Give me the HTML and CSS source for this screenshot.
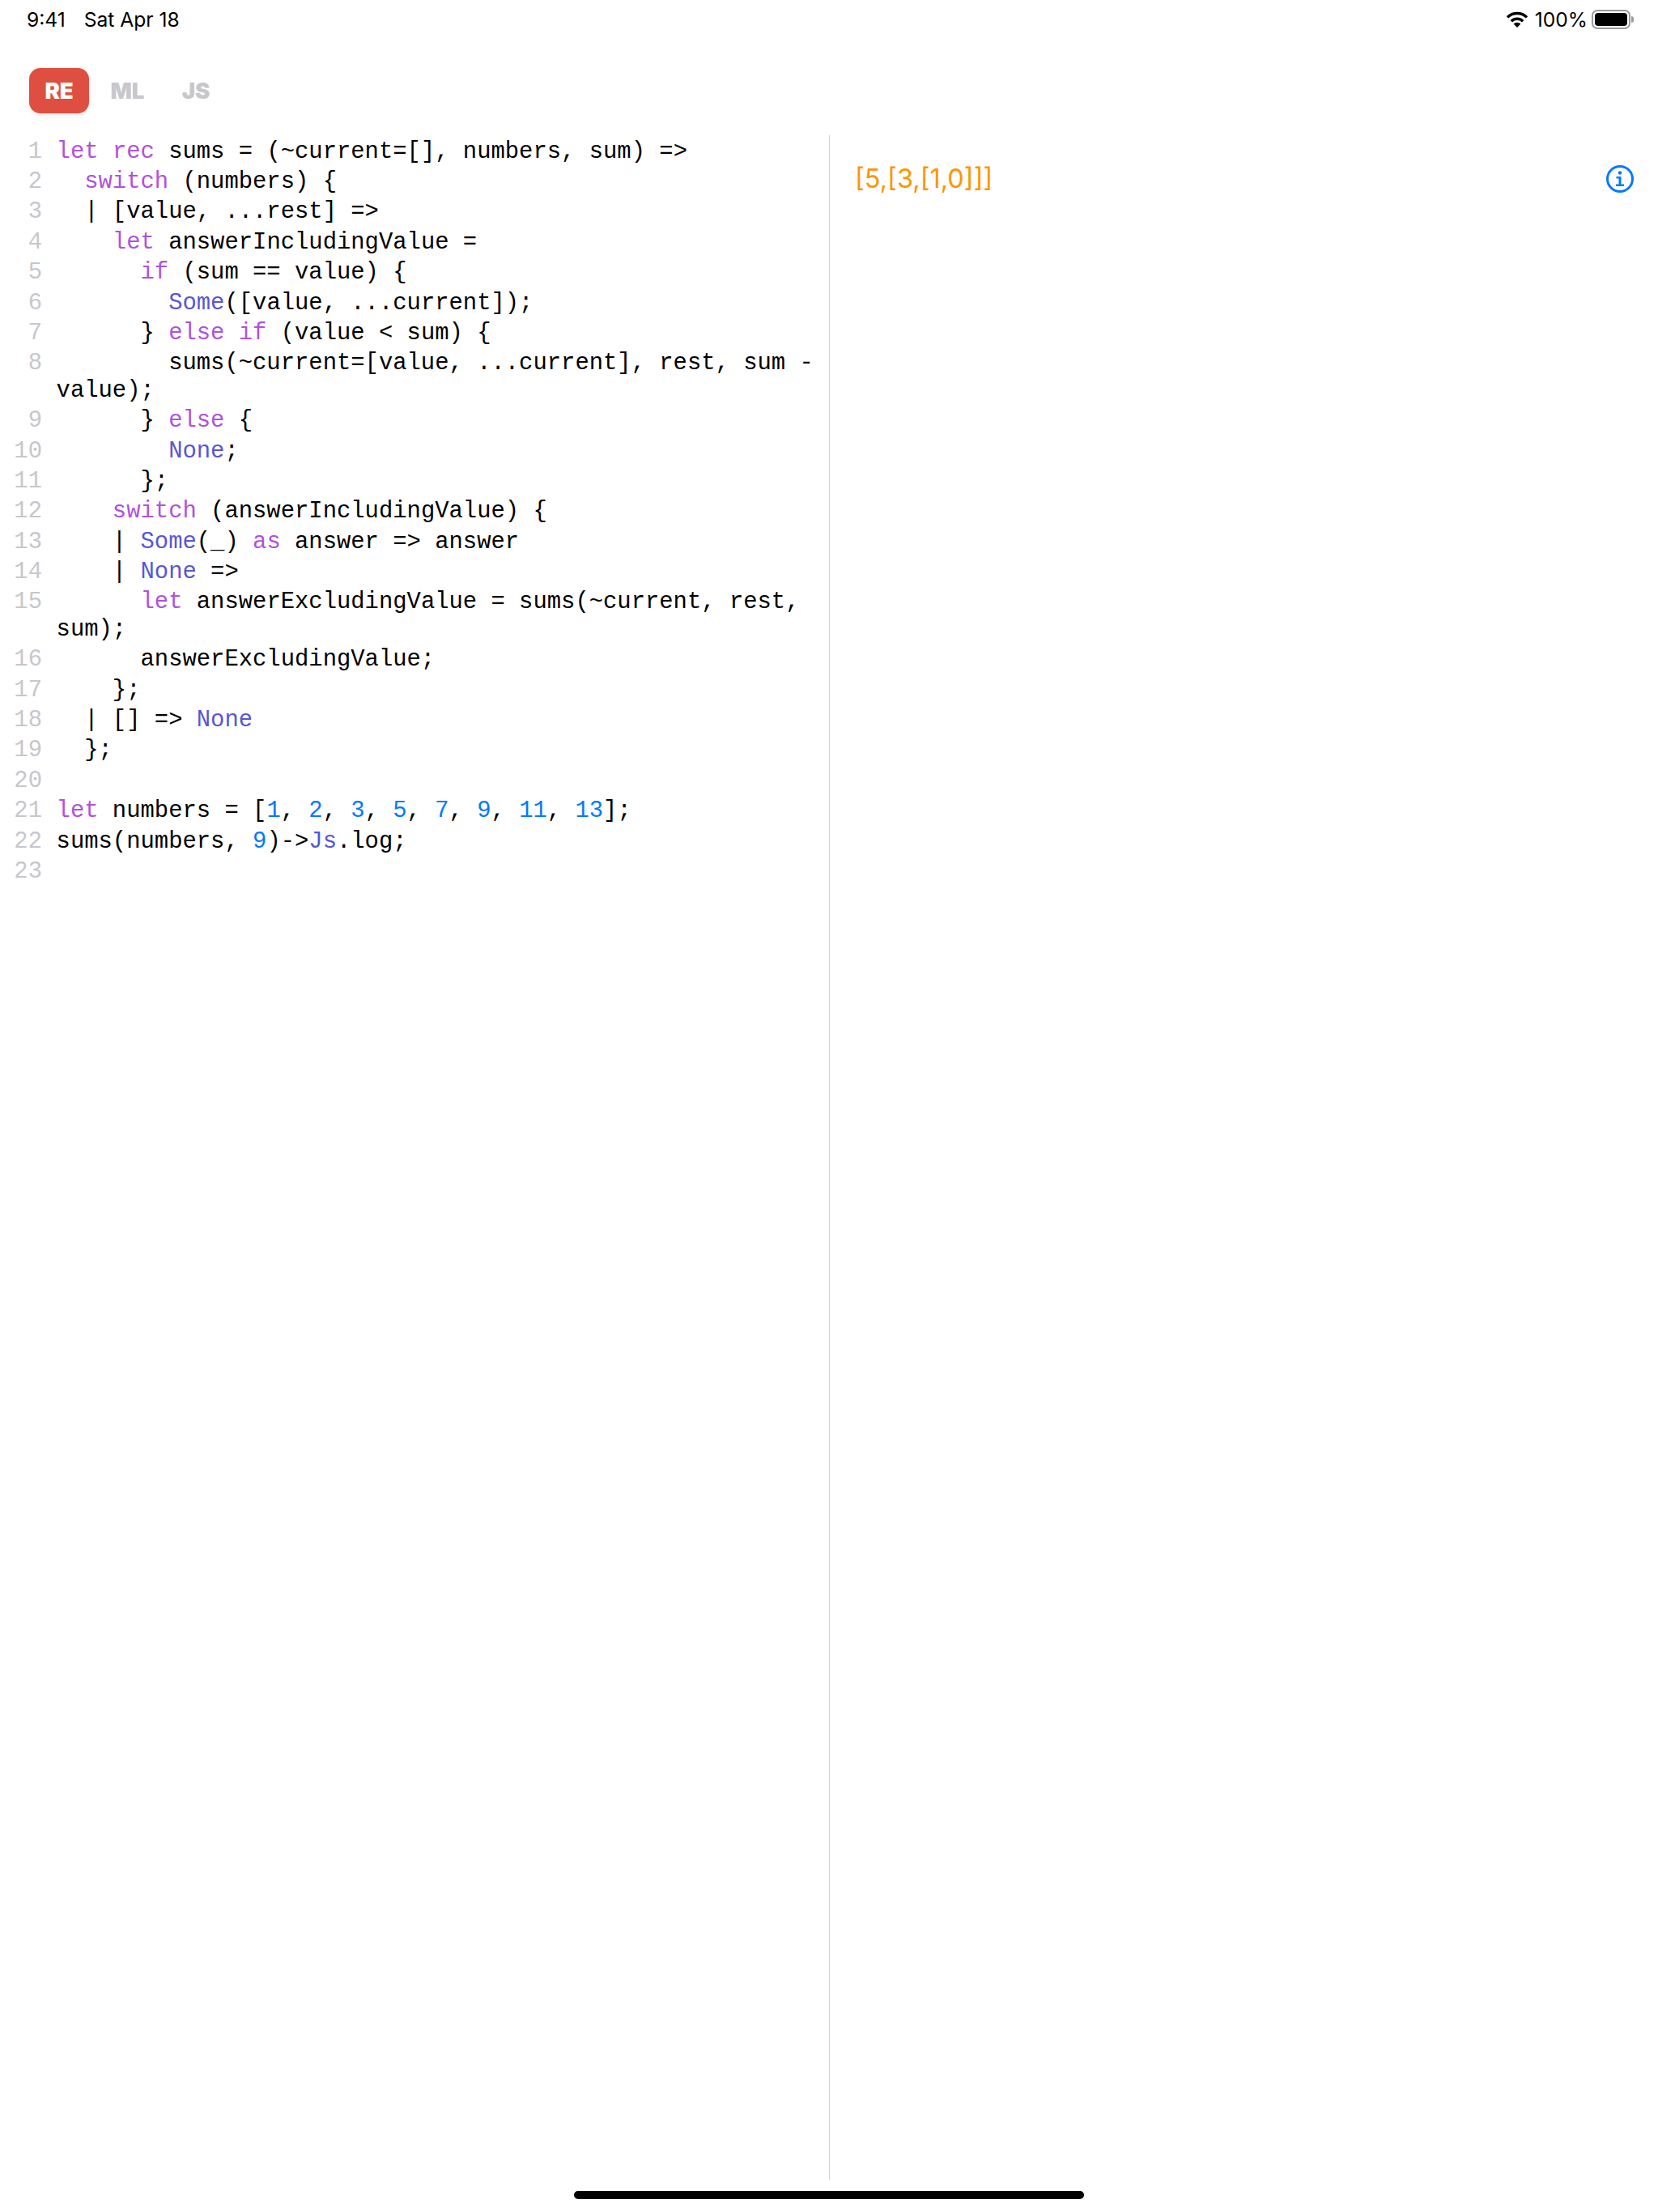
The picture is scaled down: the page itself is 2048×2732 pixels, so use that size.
FILE: index.html
```html
<!DOCTYPE html>
<html lang="en">
<head>
<meta charset="utf-8">
<title>Reason playground</title>
<link rel="stylesheet" href="styles.css">
</head>
<body>
<div class="page">
  <header class="status">
    <div class="status-left"><span>9:41</span><span>Sat Apr 18</span></div>
    <div class="status-right">
      <svg class="wifi" viewBox="0 0 28 20" width="28" height="20"><path class="wifi-arc" d="M2 7.400A17 17 0 0 1 26 7.400"/><path class="wifi-arc" d="M6.800 12.200A10.200 10.200 0 0 1 21.200 12.200"/><path d="M9.600 15.600A6.200 6.200 0 0 1 18.400 15.600L14 20Z"/></svg>
      <span class="pct">100%</span>
      <div class="battery"><div class="battery-body"><div class="battery-fill"></div></div><div class="battery-cap"></div></div>
    </div>
  </header>
  <nav class="tabs">
    <div class="tab active">RE</div>
    <div class="tab">ML</div>
    <div class="tab">JS</div>
  </nav>
  <main class="split">
    <section class="editor">
<div class="row"><span class="num">1</span><span class="code"><span class="k">let</span> <span class="k">rec</span> sums = (~current=[], numbers, sum) =&gt;</span></div>
<div class="row"><span class="num">2</span><span class="code">  <span class="k">switch</span> (numbers) {</span></div>
<div class="row"><span class="num">3</span><span class="code">  | [value, ...rest] =&gt;</span></div>
<div class="row"><span class="num">4</span><span class="code">    <span class="k">let</span> answerIncludingValue =</span></div>
<div class="row"><span class="num">5</span><span class="code">      <span class="k">if</span> (sum == value) {</span></div>
<div class="row"><span class="num">6</span><span class="code">        <span class="c">Some</span>([value, ...current]);</span></div>
<div class="row"><span class="num">7</span><span class="code">      } <span class="k">else</span> <span class="k">if</span> (value &lt; sum) {</span></div>
<div class="row"><span class="num">8</span><span class="code">        sums(~current=[value, ...current], rest, sum - value);</span></div>
<div class="row"><span class="num">9</span><span class="code">      } <span class="k">else</span> {</span></div>
<div class="row"><span class="num">10</span><span class="code">        <span class="c">None</span>;</span></div>
<div class="row"><span class="num">11</span><span class="code">      };</span></div>
<div class="row"><span class="num">12</span><span class="code">    <span class="k">switch</span> (answerIncludingValue) {</span></div>
<div class="row"><span class="num">13</span><span class="code">    | <span class="c">Some</span>(_) <span class="k">as</span> answer =&gt; answer</span></div>
<div class="row"><span class="num">14</span><span class="code">    | <span class="c">None</span> =&gt;</span></div>
<div class="row"><span class="num">15</span><span class="code">      <span class="k">let</span> answerExcludingValue = sums(~current, rest, sum);</span></div>
<div class="row"><span class="num">16</span><span class="code">      answerExcludingValue;</span></div>
<div class="row"><span class="num">17</span><span class="code">    };</span></div>
<div class="row"><span class="num">18</span><span class="code">  | [] =&gt; <span class="c">None</span></span></div>
<div class="row"><span class="num">19</span><span class="code">  };</span></div>
<div class="row"><span class="num">20</span><span class="code"></span></div>
<div class="row"><span class="num">21</span><span class="code"><span class="k">let</span> numbers = [<span class="n">1</span>, <span class="n">2</span>, <span class="n">3</span>, <span class="n">5</span>, <span class="n">7</span>, <span class="n">9</span>, <span class="n">11</span>, <span class="n">13</span>];</span></div>
<div class="row"><span class="num">22</span><span class="code">sums(numbers, <span class="n">9</span>)-&gt;<span class="c">Js</span>.log;</span></div>
<div class="row"><span class="num">23</span><span class="code"></span></div>
    </section>
    <section class="output">
      <div class="result">[5,[3,[1,0]]]</div>
      <svg class="info" viewBox="0 0 34 34" width="34" height="34"><circle cx="17" cy="17" r="15.500" fill="none" stroke="#007aff" stroke-width="3"/><circle cx="17" cy="9.500" r="2.200" fill="#007aff"/><path d="M12.500 14h6v9.500h3.500v2.500H12v-2.500h3.500v-7h-3z" fill="#007aff"/></svg>
    </section>
  </main>
  <div class="home-wrap"><div class="home-bar"></div></div>
</div>
</body>
</html>
```
FILE: styles.css
```css
* { box-sizing: border-box; }
html, body { margin: 0; padding: 0; background: #fff; }
.page {
  width: 2048px;
  height: 2732px;
  display: flex;
  flex-direction: column;
  font-family: Inter, "Liberation Sans", sans-serif;
  color: #000;
  overflow: hidden;
}
.status {
  height: 48px;
  padding: 0 30px 0 33px;
  display: flex;
  justify-content: space-between;
  align-items: center;
  font-size: 24.600px;
}
.status-left { display: flex; gap: 23px; }
.status-right { display: flex; align-items: center; gap: 5px; }
.wifi { display: block; fill: #000; margin-right: 3px; }
.wifi-arc { fill: none; stroke: #000; stroke-width: 3.400px; }
.battery { display: flex; align-items: center; gap: 1px; }
.battery-body {
  width: 48px;
  height: 24px;
  border: 2px solid #9a9a9a;
  border-radius: 7px;
  padding: 2px;
}
.battery-fill { width: 100%; height: 100%; background: #000; border-radius: 4px; }
.battery-cap { width: 3px; height: 8px; background: #9a9a9a; border-radius: 0 3px 3px 0; }
.tabs {
  margin-top: 36px;
  height: 56px;
  padding-left: 36px;
  display: flex;
  gap: 10.500px;
}
.tab {
  width: 74px;
  height: 56px;
  border-radius: 14px;
  display: flex;
  align-items: center;
  justify-content: center;
  font-size: 27.500px;
  font-weight: 900;
  color: #c7c7cc;
}
.tab.active {
  background: #df4f41;
  color: #fff;
  box-shadow: 0 2px 6px rgba(0, 0, 0, 0.1);
}
.split {
  margin-top: 27px;
  flex: 1;
  min-height: 0;
  display: flex;
}
.editor {
  width: 1025px;
  flex: none;
  border-right: 1px solid #d1d1d6;
  font-family: "Liberation Mono", monospace;
  font-size: 28.870px;
  line-height: 33.600px;
}
.row { display: flex; padding-top: 3.780px; }
.num {
  flex: none;
  width: 34.700px;
  margin: 0 17.600px 0 17.300px;
  text-align: right;
  color: #c7c7cc;
}
.code { width: 950px; white-space: pre-wrap; min-height: 33.600px; }
.k { color: #af52de; }
.c { color: #5856d6; }
.n { color: #007aff; }
.output {
  flex: 1;
  padding: 36px 30px 0 31px;
  display: flex;
  justify-content: space-between;
  align-items: flex-start;
}
.result { font-size: 32.500px; line-height: 36px; color: #ff9500; }
.info { display: block; margin-top: 1px; }
.home-wrap { height: 40px; padding-top: 14px; display: flex; justify-content: center; }
.home-bar { width: 630px; height: 10px; background: #000; border-radius: 5px; }
```
